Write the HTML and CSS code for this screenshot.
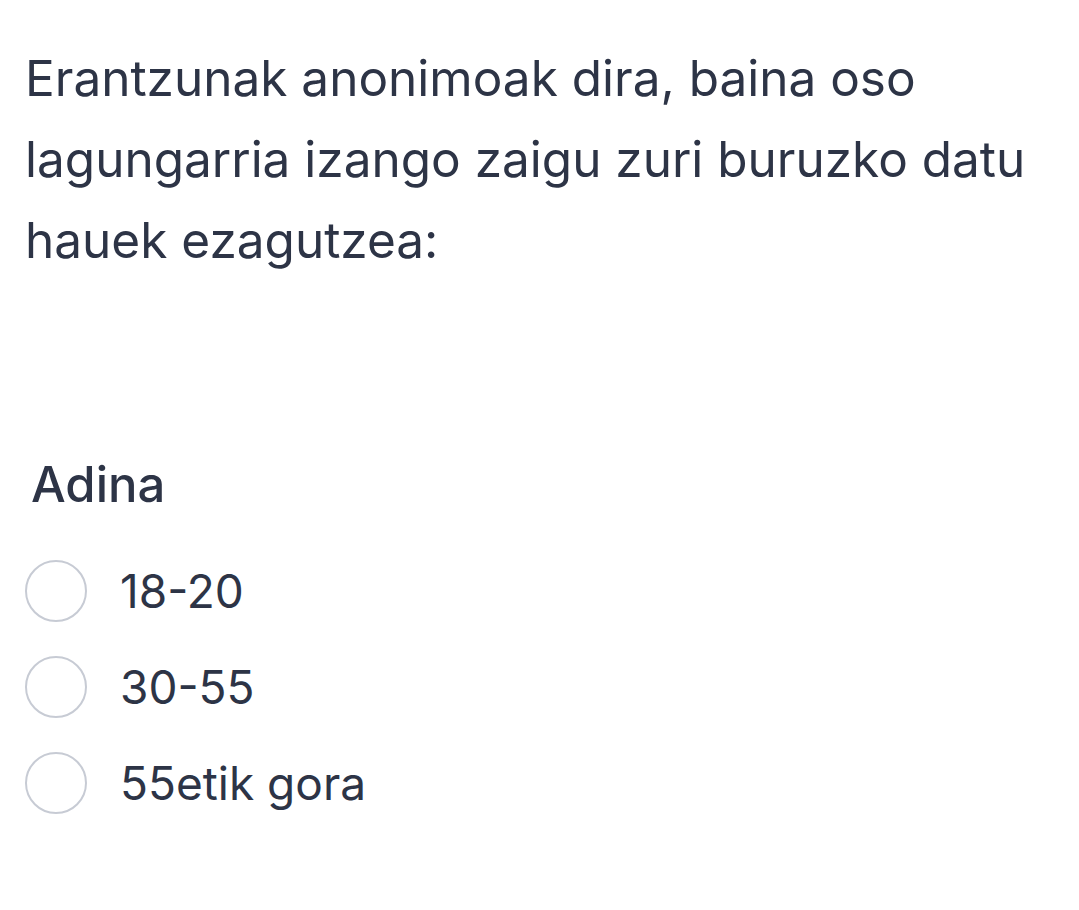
FILE: index.html
```html
<!DOCTYPE html>
<html lang="eu">
<head>
    <meta charset="UTF-8">
    <meta name="viewport" content="width=device-width, initial-scale=1.0">
    <title>Inkesta - Adina</title>
    <link rel="stylesheet" href="styles.css">
</head>
<body>
    <div class="survey">
        <p class="intro">Erantzunak anonimoak dira, baina oso lagungarria izango zaigu zuri buruzko datu hauek ezagutzea:</p>

        <div class="question">
            <div class="question-title">Adina</div>
            <label class="option">
                <span class="radio"></span>
                <span class="option-text">18-20</span>
            </label>
            <label class="option">
                <span class="radio"></span>
                <span class="option-text">30-55</span>
            </label>
            <label class="option">
                <span class="radio"></span>
                <span class="option-text">55etik gora</span>
            </label>
        </div>
    </div>
</body>
</html>
```

FILE: styles.css
```css
body {
    font-family: 'Inter', 'Noto Sans', sans-serif;
    background: #ffffff;
    color: #2d3446;
    margin: 0;
    padding: 0;
}

.survey {
    padding: 38px 25px 0 25px;
}

.intro {
    margin: 0;
    font-size: 49.5px;
    line-height: 81px;
}

.question {
    margin-top: 174px;
}

.question-title {
    font-size: 49px;
    font-weight: 500;
    line-height: 60px;
    padding-left: 6px;
    margin-bottom: 28px;
}

.option {
    display: flex;
    align-items: center;
    gap: 33px;
    height: 96px;
}

.radio {
    width: 58px;
    height: 58px;
    border: 2px solid #c7cbd4;
    border-radius: 50%;
    flex-shrink: 0;
}

.option-text {
    font-size: 46px;
}
```
